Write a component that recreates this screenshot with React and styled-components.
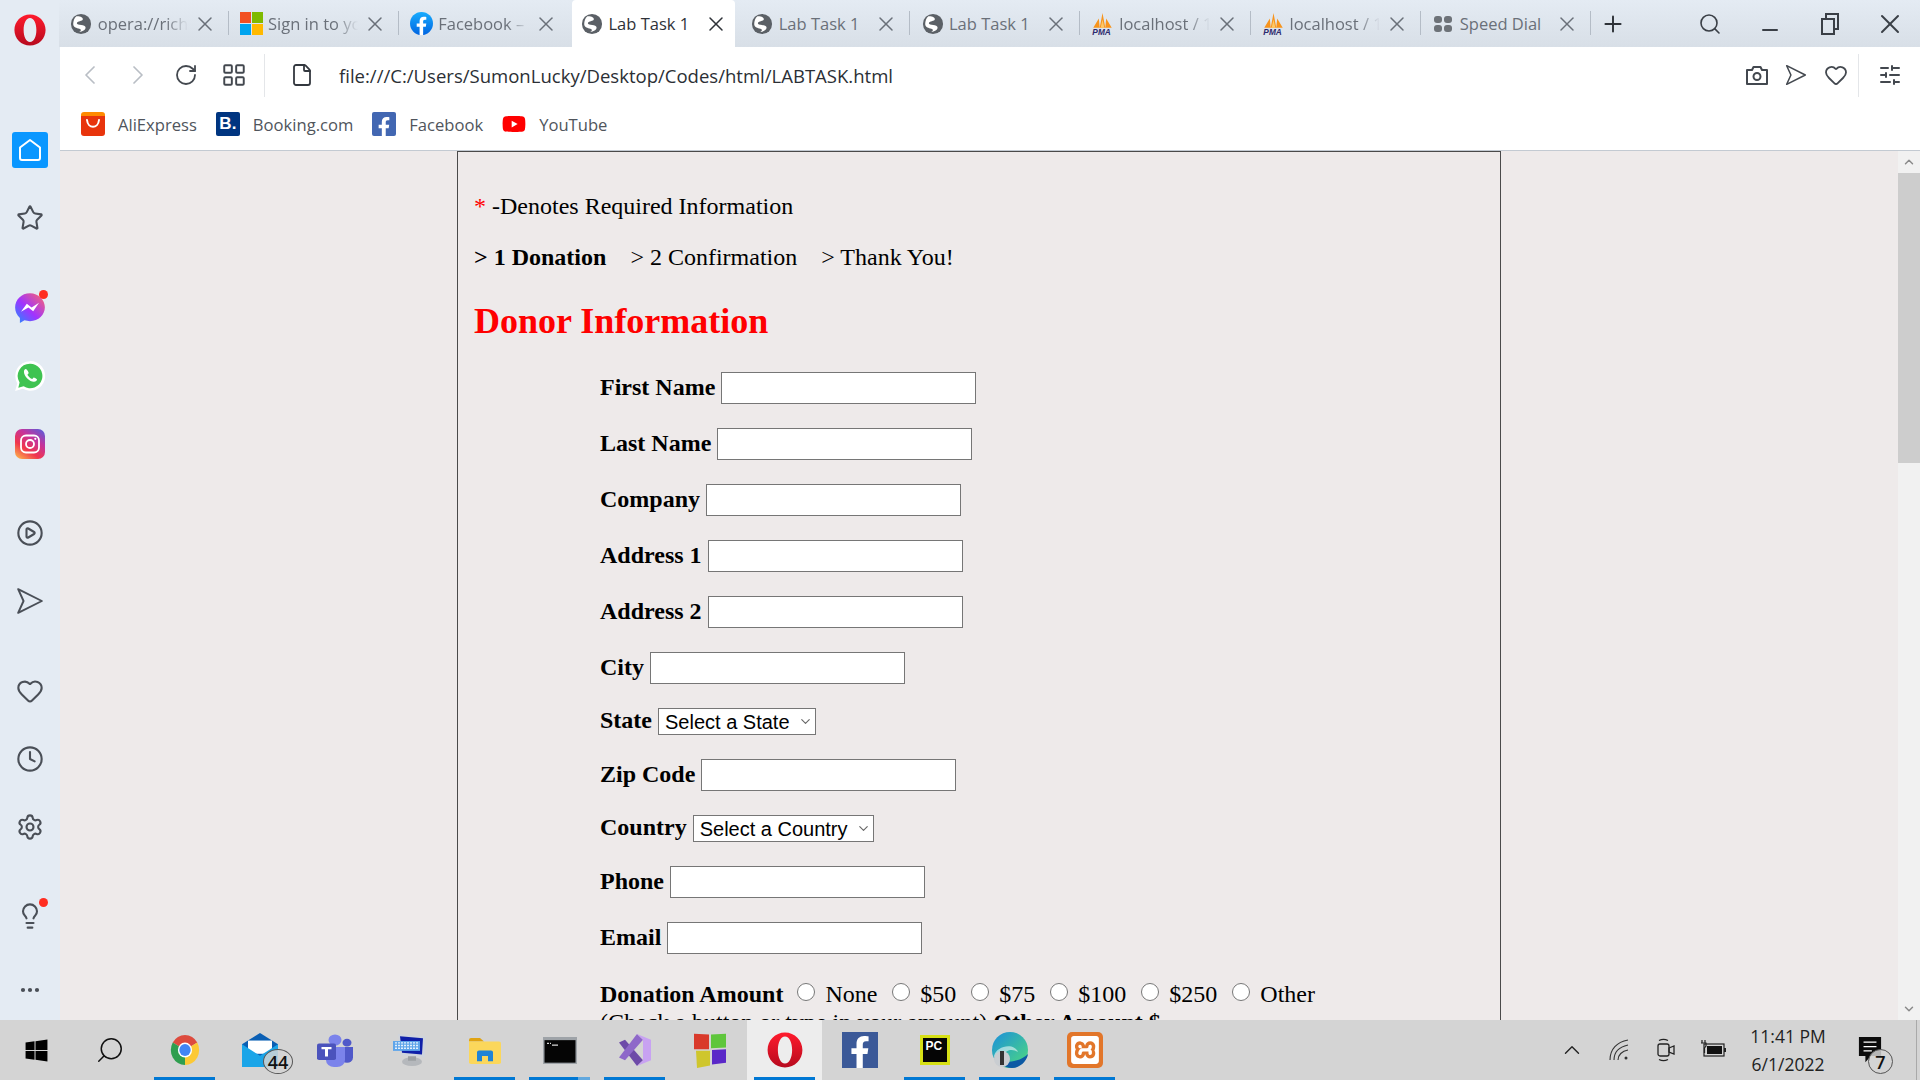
import React from "react";
import styled, { createGlobalStyle } from "styled-components";
import {
  ChevronDown,
  ChevronLeft,
  ChevronRight,
  ChevronUp,
  Clock,
  CirclePlay,
  File,
  Heart,
  Lightbulb,
  LayoutGrid,
  Minus,
  MoreHorizontal,
  Plus,
  RotateCw,
  Search,
  Settings,
  SlidersHorizontal,
  Star,
  X,
} from "lucide-react";
import { FaFacebookF, FaWindows, FaYoutube } from "react-icons/fa";
import { SiXampp } from "react-icons/si";

const UI_FONT = `"Open Sans", "Noto Sans", sans-serif`;

const GlobalStyle = createGlobalStyle`
  html, body {
    margin: 0;
    padding: 0;
    overflow: hidden;
    background: #eeeaea;
  }
`;

const Screen = styled.div`
  width: 1920px;
  height: 1080px;
  display: flex;
  flex-direction: column;
  overflow: hidden;
`;

const Browser = styled.div`
  flex: 1;
  min-height: 0;
  display: flex;
`;

const Sidebar = styled.aside`
  width: 60px;
  flex: none;
  background: #e4ebf3;
  display: flex;
  flex-direction: column;
  align-items: center;
`;

const LogoSlot = styled.div`
  height: 132px;
  flex: none;
  padding-top: 13px;
  box-sizing: border-box;
`;

const SideGroup = styled.div`
  display: flex;
  flex-direction: column;
  gap: 32px;
  margin-bottom: ${({ $after }) => $after ?? 54}px;
`;

const SideIcon = styled.div`
  position: relative;
  width: 36px;
  height: 36px;
  display: flex;
  align-items: center;
  justify-content: center;
  color: #4a4f57;
  border-radius: 3px;
  background: ${({ $active }) => ($active ? "#0a97ff" : "transparent")};
`;

const RedDot = styled.span`
  position: absolute;
  top: 0;
  right: 0;
  width: 9px;
  height: 9px;
  border-radius: 50%;
  background: #ff2d20;
`;

const Content = styled.div`
  flex: 1;
  min-width: 0;
  display: flex;
  flex-direction: column;
`;

const TabStrip = styled.div`
  height: 47px;
  flex: none;
  display: flex;
  align-items: stretch;
  margin-left: -1.25px;
  background: linear-gradient(#e4ebf3, #d8dfe7);
`;

const Tab = styled.div`
  position: relative;
  width: 170.25px;
  flex: none;
  box-sizing: border-box;
  display: flex;
  align-items: center;
  gap: 5px;
  padding: 0 12px 0 11px;
  font: 16.5px ${UI_FONT};
  color: ${({ $active }) => ($active ? "#2e3238" : "#6a7079")};

  &::before {
    content: "";
    display: ${({ $active }) => ($active ? "block" : "none")};
    position: absolute;
    inset: 0 5px 0 2px;
    background: #fff;
    border-radius: 4px 4px 0 0;
  }

  &::after {
    content: "";
    display: ${({ $sep }) => ($sep ? "block" : "none")};
    position: absolute;
    right: 0;
    top: 11px;
    bottom: 12px;
    width: 1px;
    background: #b4bcc6;
  }

  & > * {
    position: relative;
    z-index: 1;
  }
`;

const TabFavicon = styled.div`
  width: 23px;
  height: 23px;
  flex: none;
  display: flex;
  align-items: center;
  justify-content: center;
`;

const TabLabel = styled.span`
  flex: 1;
  min-width: 0;
  white-space: nowrap;
  overflow: hidden;
  mask-image: ${({ $fade }) =>
    $fade ? "linear-gradient(90deg, #000 75%, transparent 100%)" : "none"};
`;

const NewTab = styled.div`
  width: 44px;
  display: flex;
  align-items: center;
  justify-content: center;
  color: #2e3238;
`;

const WindowControls = styled.div`
  margin-left: auto;
  display: flex;
`;

const WindowButton = styled.div`
  width: 60px;
  display: flex;
  align-items: center;
  justify-content: center;
  color: #3a3f46;
`;

const Toolbar = styled.div`
  height: 53px;
  flex: none;
  box-sizing: border-box;
  background: #fff;
  display: flex;
  align-items: center;
  padding: 3px 9px 0 6px;
`;

const ToolButton = styled.div`
  width: ${({ $w }) => $w ?? 48}px;
  height: 44px;
  flex: none;
  display: flex;
  align-items: center;
  justify-content: center;
  color: ${({ $dim }) => ($dim ? "#b9bec5" : "#43484f")};
`;

const ToolDivider = styled.div`
  width: 1px;
  height: 43px;
  flex: none;
  background: #e4e6e9;
  margin: 0 ${({ $right }) => $right ?? 0}px 0 ${({ $left }) => $left ?? 0}px;
`;

const UrlIcon = styled.div`
  width: 74px;
  flex: none;
  display: flex;
  justify-content: center;
  color: #33383f;
`;

const UrlText = styled.div`
  flex: 1;
  font: 18.55px ${UI_FONT};
  color: #2b2f35;
  white-space: nowrap;
`;

const Bookmarks = styled.div`
  height: 51px;
  flex: none;
  box-sizing: border-box;
  background: #fff;
  border-bottom: 1px solid #c3cad2;
  display: flex;
  align-items: flex-start;
  padding: 12px 0 0 21px;
  gap: 19px;
`;

const Bookmark = styled.div`
  display: flex;
  align-items: center;
  gap: 13px;
  font: 16.6px ${UI_FONT};
  color: #50555c;
`;

const BookmarkIcon = styled.div`
  width: 24px;
  height: 24px;
  flex: none;
  display: flex;
  align-items: center;
  justify-content: center;
  color: #fff;
  background: ${({ $bg }) => $bg};
  border-radius: ${({ $round }) => $round ?? 2}px;
  overflow: hidden;
`;

const BookingMark = styled.span`
  font: 700 17px "Liberation Sans", sans-serif;
`;

const Viewport = styled.div`
  flex: 1;
  min-height: 0;
  display: flex;
  background: #eeeaea;
`;

const PageArea = styled.main`
  flex: 1;
  min-width: 0;
  overflow: hidden;
  padding-left: 397px;
`;

const Panel = styled.div`
  width: 1044px;
  box-sizing: border-box;
  border: 1.5px solid #4a4a4a;
  border-bottom: 0;
  padding: 41px 16px 0;
  font: 24px "Liberation Serif", "Times New Roman", serif;
  color: #000;
`;

const Note = styled.p`
  margin: 0 0 24px;
`;

const Required = styled.span`
  color: #f00;
`;

const Steps = styled.div`
  display: flex;
  gap: 24px;
`;

const Step = styled.span`
  font-weight: ${({ $current }) => ($current ? 700 : 400)};
`;

const Heading = styled.h2`
  margin: 29px 0 30px;
  font-size: 36px;
  font-weight: 700;
  color: #f00;
`;

const Fields = styled.form`
  margin: 0 0 0 126px;
`;

const FieldRow = styled.div`
  display: flex;
  align-items: center;
  gap: 6px;
  margin-bottom: 24px;

  &:nth-last-child(3) {
    margin-bottom: 27px;
  }

  label {
    line-height: 25px;
    margin-bottom: 2px;
  }
`;

const FieldLabel = styled.label`
  font-weight: 700;
`;

const TextInput = styled.input`
  width: 255px;
  height: 32px;
  box-sizing: border-box;
  border: 1.5px solid #767676;
  background: #fff;
  padding: 0 3px;
  border-radius: 0;
`;

const DropdownWrap = styled.div`
  position: relative;
  display: flex;
  color: #666;

  svg {
    position: absolute;
    right: 3px;
    top: 6px;
    pointer-events: none;
  }
`;

const Dropdown = styled.select`
  width: ${({ $w }) => $w}px;
  height: 27px;
  box-sizing: border-box;
  appearance: none;
  border: 1.5px solid #767676;
  border-radius: 0;
  background-color: #fff;
  font: 20px "Liberation Sans", Arial, sans-serif;
  color: #000;
  padding: 0 0 0 6px;
  margin: 0;
`;

const AmountLine = styled.div`
  line-height: 27.6px;
`;

const Radio = styled.input`
  width: 18px;
  height: 18px;
  margin: 0 10px 0 ${({ $first }) => ($first ? 14 : 9)}px;
  vertical-align: 1px;
`;

const AmountLabel = styled.span`
  margin-right: 6px;
`;

const Scrollbar = styled.div`
  width: 22px;
  flex: none;
  background: #f1f1f1;
  display: flex;
  flex-direction: column;
`;

const ScrollArrow = styled.div`
  height: 22px;
  flex: none;
  display: flex;
  align-items: center;
  justify-content: center;
  color: #8a8a8a;
  margin-top: ${({ $end }) => ($end ? "auto" : 0)};
`;

const ScrollThumb = styled.div`
  height: 290px;
  flex: none;
  background: #cdcdcd;
`;

const Taskbar = styled.footer`
  height: 60px;
  flex: none;
  display: flex;
  background: #d4d4d4;
  position: relative;
  z-index: 2;
`;

const TaskItem = styled.div`
  position: relative;
  width: ${({ $w }) => $w ?? 75}px;
  flex: none;
  display: flex;
  align-items: center;
  justify-content: center;
  background: ${({ $active }) => ($active ? "#ededed" : "transparent")};

  &::after {
    content: "";
    display: ${({ $open }) => ($open ? "block" : "none")};
    position: absolute;
    left: 7px;
    right: 7px;
    bottom: 0;
    height: 3px;
    background: ${({ $stacked }) =>
      $stacked ? "linear-gradient(90deg, #0078d4 80%, #62a8de 80%)" : "#0078d4"};
  }
`;

const CountBadge = styled.span`
  position: absolute;
  left: ${({ $left }) => $left}px;
  top: ${({ $top }) => $top}px;
  width: ${({ $w }) => $w}px;
  height: 25px;
  box-sizing: border-box;
  border: 1px solid #555;
  border-radius: 50%;
  background: rgba(212, 212, 212, 0.85);
  display: flex;
  align-items: center;
  justify-content: center;
  font: 600 18px ${UI_FONT};
  color: #111;
`;

const Tray = styled.div`
  margin-left: auto;
  display: flex;
  align-items: center;
  color: #222;
`;

const TrayIcon = styled.div`
  width: 47px;
  display: flex;
  justify-content: center;
`;

const ClockBlock = styled.div`
  width: 80px;
  margin-left: 12px;
  text-align: center;
  font: 17.5px/28px ${UI_FONT};
  color: #222;
`;

const ChatSlot = styled.div`
  position: relative;
  width: 88px;
  box-sizing: border-box;
  padding-right: 4px;
  display: flex;
  justify-content: center;
`;

const ShowDesktop = styled.div`
  width: 1px;
  align-self: stretch;
  background: #a9a9a9;
  margin-right: 3px;
`;

const GlobeIcon = () => (
  <svg width="22" height="22" viewBox="0 0 24 24">
    <circle cx="12" cy="12" r="11" fill="#5b6066" />
    <path
      d="M7 3.500c3 0 7 .6 7 3.200 0 2.400-6.500 1.600-6.500 4.600 0 2.700 9.500 1 9.500 4.600 0 2.700-3.500 4.600-7 4.900 2.500-1.800 3-3-1-3.900-3-.8-5.500-1.900-5.500-4.900C3.500 9 4.500 5.500 7 3.500z"
      fill="#fff"
    />
  </svg>
);

const MicrosoftIcon = () => (
  <svg width="23" height="23" viewBox="0 0 23 23">
    <rect width="11" height="11" fill="#f25022" />
    <rect x="12" width="11" height="11" fill="#7fba00" />
    <rect y="12" width="11" height="11" fill="#00a4ef" />
    <rect x="12" y="12" width="11" height="11" fill="#ffb900" />
  </svg>
);

const FacebookRound = () => (
  <svg width="23" height="23" viewBox="0 0 24 24">
    <defs>
      <linearGradient id="fbRound" x1="0" y1="0" x2="0" y2="1">
        <stop offset="0" stopColor="#18acfe" />
        <stop offset="1" stopColor="#0165e1" />
      </linearGradient>
    </defs>
    <circle cx="12" cy="12" r="12" fill="url(#fbRound)" />
    <path
      d="M16.500 15.400l.5-3.400h-3.300V9.800c0-.9.500-1.800 1.900-1.800H17V5.100s-1.300-.2-2.600-.2c-2.700 0-4.400 1.600-4.400 4.500V12H7v3.400h3V24h3.700v-8.600z"
      fill="#fff"
    />
  </svg>
);

const PmaIcon = () => (
  <svg width="24" height="24" viewBox="0 0 24 26">
    <path d="M2 17L8 7l1 10zM9 17l3-16 3 16zM15 17l1-10 6 10z" fill="#f7941d" />
    <path d="M10 17l2-9 2 9z" fill="#ffc966" />
    <text x="1" y="25" fontFamily="Liberation Sans" fontStyle="italic" fontWeight="700" fontSize="9" fill="#2d2a6e">
      PMA
    </text>
  </svg>
);

const SpeedDialIcon = () => (
  <svg width="20" height="20" viewBox="0 0 20 20" fill="#6d7278">
    <rect x="1" y="2" width="8" height="7" rx="3" />
    <rect x="11" y="2" width="8" height="7" rx="3" />
    <rect x="1" y="11" width="8" height="7" rx="3" />
    <rect x="11" y="11" width="8" height="7" rx="3" />
  </svg>
);

const OperaLogo = ({ size = 34 }) => (
  <svg width={size} height={size} viewBox="0 0 48 48">
    <defs>
      <linearGradient id={`opera${size}`} x1="0" y1="0" x2="0" y2="1">
        <stop offset="0" stopColor="#ff1b2d" />
        <stop offset="1" stopColor="#b70a1e" />
      </linearGradient>
    </defs>
    <path
      fillRule="evenodd"
      d="M24 2c12.500 0 22 10 22 22s-9.500 22-22 22S2 36 2 24 11.500 2 24 2zm0 5c-5.500 0-9 7.500-9 17s3.500 17 9 17 9-7.500 9-17-3.500-17-9-17z"
      fill={`url(#opera${size})`}
    />
  </svg>
);

const HomeIcon = () => (
  <svg width="26" height="26" viewBox="0 0 26 26" fill="none" stroke="#fff" strokeWidth="2" strokeLinejoin="round">
    <path d="M3 10.500L13 3l10 7.500V21a2 2 0 0 1-2 2H5a2 2 0 0 1-2-2z" />
  </svg>
);

const SendIcon = ({ size = 28, width = 1.8 }) => (
  <svg width={size} height={size} viewBox="0 0 26 26" fill="none" stroke="currentColor" strokeWidth={width} strokeLinejoin="round">
    <path d="M2 2l22 11L2 24l5-11z" />
  </svg>
);

const MessengerIcon = () => (
  <svg width="34" height="34" viewBox="0 0 32 32">
    <defs>
      <linearGradient id="messenger" x1="0" y1="1" x2="1" y2="0">
        <stop offset="0" stopColor="#1e90ff" />
        <stop offset="0.45" stopColor="#a033ff" />
        <stop offset="1" stopColor="#ff6968" />
      </linearGradient>
    </defs>
    <path d="M16 2C8 2 2 8 2 15.500c0 4 1.700 7.400 4.500 9.800V30l4.300-2.400c1.600.5 3.300.8 5.200.8 8 0 14-5.900 14-13S24 2 16 2z" fill="url(#messenger)" />
    <path d="M7.500 19.500L13 12l4.500 3.500L24.500 11 19 19l-4.500-3.500z" fill="#fff" />
  </svg>
);

const WhatsappIcon = () => (
  <svg width="34" height="34" viewBox="0 0 32 32">
    <path d="M16 2a14 14 0 0 0-12 21L2 30l7.200-1.900A14 14 0 1 0 16 2z" fill="#fff" />
    <path d="M16 4.500a11.500 11.500 0 0 0-9.800 17.600L5 27l5-1.300A11.500 11.500 0 1 0 16 4.500z" fill="#3fc351" />
    <path d="M11.800 9.500c-.5 0-1.500.9-1.500 2.700 0 3.800 5.300 9.300 9.400 9.300 1.800 0 2.900-1.300 2.900-2.200 0-.4-2.600-1.800-3-1.800-.5 0-1.100 1.300-1.600 1.300-1 0-4.300-3-4.300-4 0-.6 1-1.100 1-1.700 0-.3-1.300-3.600-2.900-3.600z" fill="#fff" />
  </svg>
);

const InstagramIcon = () => (
  <svg width="30" height="30" viewBox="0 0 30 30">
    <defs>
      <linearGradient id="insta" x1="0.1" y1="1" x2="0.8" y2="0">
        <stop offset="0" stopColor="#fdb04b" />
        <stop offset="0.35" stopColor="#f0364e" />
        <stop offset="0.7" stopColor="#c4339d" />
        <stop offset="1" stopColor="#6a56d0" />
      </linearGradient>
    </defs>
    <rect width="30" height="30" rx="7" fill="url(#insta)" />
    <rect x="6" y="6.500" width="18" height="17" rx="5" fill="none" stroke="#fff" strokeWidth="1.800" />
    <circle cx="15" cy="15" r="4" fill="none" stroke="#fff" strokeWidth="1.800" />
    <circle cx="20.300" cy="9.800" r="1.100" fill="#fff" />
  </svg>
);

const ChromeIcon = () => (
  <svg width="34" height="36" viewBox="0 0 48 48" preserveAspectRatio="none">
    <path d="M24 24L6.700 14A20 20 0 0 1 41.300 14z" fill="#dd4b3e" />
    <path d="M24 24L41.300 14A20 20 0 0 1 24 44z" fill="#fcc934" />
    <path d="M24 24L24 44A20 20 0 0 1 6.700 14z" fill="#2f9e4f" />
    <circle cx="24" cy="24" r="10" fill="#fff" />
    <circle cx="24" cy="24" r="8" fill="#4285f4" />
  </svg>
);

const MailIcon = () => (
  <svg width="36" height="34" viewBox="0 0 36 36" preserveAspectRatio="none">
    <path d="M0 12L18 0l18 12v22H0z" fill="#0a5fb4" />
    <path d="M6 8h24v14H6z" fill="#fff" />
    <path d="M0 12l18 12 18-12v24H0z" fill="#1aa5e8" />
  </svg>
);

const TeamsIcon = () => (
  <svg width="36" height="33" viewBox="0 0 36 38" preserveAspectRatio="none">
    <circle cx="18" cy="7" r="6.500" fill="#7b83eb" />
    <circle cx="30" cy="10" r="4.500" fill="#5059c9" />
    <path d="M24 15h12v12a6 6 0 0 1-12 0z" fill="#5059c9" />
    <path d="M9 15h19v15a8 8 0 0 1-8 8h-3a8 8 0 0 1-8-8z" fill="#7b83eb" />
    <rect x="0" y="11" width="19" height="19" rx="2" fill="#4b53bc" />
    <path d="M4.500 15h10v2.500h-3.500V26H8v-8.500H4.500z" fill="#fff" />
  </svg>
);

const KeyboardIcon = () => (
  <svg width="36" height="34" viewBox="0 0 36 38" preserveAspectRatio="none">
    <path d="M6 1l28 3-1 23-24-2z" fill="#cfd4dc" />
    <path d="M8 3.500l23 2.500-1 18-20-2z" fill="#0f1fa8" />
    <rect x="1" y="9" width="27" height="11" fill="#5fa5ea" />
    <path d="M3 11h23M3 14h23M3 17h23" stroke="#e4f0fb" strokeWidth="1.500" strokeDasharray="2 1" />
    <ellipse cx="20" cy="32" rx="10" ry="5" fill="#b5b8bc" />
    <rect x="16" y="26" width="8" height="5" fill="#9c9fa3" />
  </svg>
);

const FolderIcon = () => (
  <svg width="32" height="27" viewBox="0 0 32 30" preserveAspectRatio="none">
    <path d="M0 3a2 2 0 0 1 2-2h9l4 4h-15z" fill="#e0a312" />
    <path d="M0 5h30a2 2 0 0 1 2 2v21a2 2 0 0 1-2 2H2a2 2 0 0 1-2-2z" fill="#fbd75b" />
    <path d="M8 27V17a2 2 0 0 1 2-2h12a2 2 0 0 1 2 2v10h-5v-6h-6v6z" fill="#1f84d6" />
  </svg>
);

const ConsoleIcon = () => (
  <svg width="34" height="27" viewBox="0 0 34 30" preserveAspectRatio="none">
    <rect width="34" height="30" fill="#9ea3a8" />
    <rect x="1.500" y="3.500" width="31" height="25" fill="#050505" />
    <path d="M4 7h2M7 7h1M9 9h6" stroke="#d8d8d8" strokeWidth="1.500" />
  </svg>
);

const VisualStudioIcon = () => (
  <svg width="32" height="32" viewBox="0 0 32 34" preserveAspectRatio="none">
    <path d="M0 9l6-3 18 22-6 6z" fill="#6d4aa8" />
    <path d="M0 25l6 3L24 6 18 0z" fill="#8e68c9" />
    <path d="M18 0l14 6v22l-14 6 6-6V6z" fill="#c8a2f2" />
  </svg>
);

const CodeBlocksIcon = () => (
  <svg width="34" height="36" viewBox="0 0 34 42" preserveAspectRatio="none">
    <path d="M1 2l15 1v17L1 20z" fill="#d93a2b" />
    <path d="M18 3l15-1v16l-15 1z" fill="#5fc63c" />
    <path d="M3 22l14 0v17L4 42z" fill="#cfc62d" />
    <path d="M19 21l14-1v16l-14 2z" fill="#5a28c8" />
  </svg>
);

const FacebookTile = styled.div`
  width: 36px;
  height: 36px;
  background: #3b5998;
  color: #fff;
  display: flex;
  align-items: flex-end;
  justify-content: center;
`;

const PyCharmTile = styled.div`
  width: 30px;
  height: 30px;
  box-sizing: border-box;
  border: 3px solid #d6e016;
  background: #050505;
  color: #fff;
  font: 700 12px "Liberation Sans", sans-serif;
  padding: 2px 0 0 3px;
  line-height: 12px;
`;

const EdgeIcon = () => (
  <svg width="36" height="36" viewBox="0 0 36 36">
    <defs>
      <linearGradient id="edgeTop" x1="0" y1="0" x2="1" y2="1">
        <stop offset="0" stopColor="#1b8fdc" />
        <stop offset="1" stopColor="#4fdc7c" />
      </linearGradient>
    </defs>
    <circle cx="18" cy="18" r="18" fill="url(#edgeTop)" />
    <path d="M36 22c-1 7-8 14-16 14-8 0-15-6-15-12 4 5 11 7 17 5 6-1 11-4 14-7z" fill="#0c59a4" />
    <path d="M2 24C4 14 22 10 26 20c-6-4-14-2-14 5 0 3 1 5 2 6-6 0-10-3-12-7z" fill="#fff" opacity="0.55" />
    <circle cx="10" cy="27" r="8" fill="#c9cdd1" />
    <rect x="8" y="19" width="4" height="14" fill="#333" />
  </svg>
);

const XamppTile = styled.div`
  width: 36px;
  height: 36px;
  border-radius: 5px;
  background: #e2762a;
  color: #fff;
  display: flex;
  align-items: center;
  justify-content: center;
`;

const WifiIcon = () => (
  <svg width="20" height="22" viewBox="0 0 20 22" fill="none" stroke="#333" strokeWidth="1.100">
    <path d="M1 21C1 10 8 3 19 1M5 21c0-8 5-13 14-15M9 21c0-5 4-9 10-10" />
    <circle cx="17" cy="19" r="1.500" fill="#333" stroke="none" />
  </svg>
);

const CallIcon = () => (
  <svg width="20" height="24" viewBox="0 0 20 24" fill="none" stroke="#222" strokeWidth="1.300">
    <rect x="2" y="6" width="11" height="12" rx="2" />
    <path d="M13 10l5-2v8l-5-2z" />
    <path d="M3 2.500c3-1.500 6-1.500 9 0M3 21.500c3 1.500 6 1.500 9 0" />
  </svg>
);

const BatteryIcon = () => (
  <svg width="26" height="22" viewBox="0 0 26 22" fill="none" stroke="#222" strokeWidth="1.200">
    <rect x="4" y="5" width="20" height="12" />
    <rect x="7" y="7" width="15" height="8" fill="#111" stroke="none" />
    <rect x="24" y="9" width="2" height="4" fill="#222" stroke="none" />
    <path d="M2 1v3M5 1v3M1 4h5v3l-1.500 2v5" />
  </svg>
);

const ChatIcon = () => (
  <svg width="24" height="26" viewBox="0 0 26 30" preserveAspectRatio="none">
    <path d="M1 0h24v22H14l-6 7v-7H1z" fill="#0c0c0c" />
    <path d="M6 6h14M6 11h14M6 16h9" stroke="#fff" strokeWidth="1.500" />
  </svg>
);

const tabs = [
  { id: 1, icon: <GlobeIcon />, label: "opera://richer", fade: true, sep: true },
  { id: 2, icon: <MicrosoftIcon />, label: "Sign in to your", fade: true, sep: true },
  { id: 3, icon: <FacebookRound />, label: "Facebook – Log", fade: true },
  { id: 4, icon: <GlobeIcon />, label: "Lab Task 1", active: true },
  { id: 5, icon: <GlobeIcon />, label: "Lab Task 1", sep: true },
  { id: 6, icon: <GlobeIcon />, label: "Lab Task 1", sep: true },
  { id: 7, icon: <PmaIcon />, label: "localhost / 127", fade: true, sep: true },
  { id: 8, icon: <PmaIcon />, label: "localhost / 127", fade: true, sep: true },
  { id: 9, icon: <SpeedDialIcon />, label: "Speed Dial", sep: true },
];

const fields = [
  { label: "First Name" },
  { label: "Last Name" },
  { label: "Company" },
  { label: "Address 1" },
  { label: "Address 2" },
  { label: "City" },
  { label: "State", select: "Select a State", width: 158 },
  { label: "Zip Code" },
  { label: "Country", select: "Select a Country", width: 181 },
  { label: "Phone" },
  { label: "Email" },
];

const amounts = ["None", "$50", "$75", "$100", "$250", "Other"];

export default function App() {
  return (
    <Screen>
      <GlobalStyle />
      <Browser>
        <Sidebar>
          <LogoSlot>
            <OperaLogo />
          </LogoSlot>
          <SideGroup>
            <SideIcon $active>
              <HomeIcon />
            </SideIcon>
            <SideIcon>
              <Star size={28} strokeWidth={1.8} />
            </SideIcon>
          </SideGroup>
          <SideGroup $after={53}>
            <SideIcon>
              <MessengerIcon />
              <RedDot />
            </SideIcon>
            <SideIcon>
              <WhatsappIcon />
            </SideIcon>
            <SideIcon>
              <InstagramIcon />
            </SideIcon>
          </SideGroup>
          <SideGroup>
            <SideIcon>
              <CirclePlay size={28} strokeWidth={1.8} />
            </SideIcon>
            <SideIcon>
              <SendIcon />
            </SideIcon>
          </SideGroup>
          <SideGroup $after={53}>
            <SideIcon>
              <Heart size={28} strokeWidth={1.8} />
            </SideIcon>
            <SideIcon>
              <Clock size={28} strokeWidth={1.8} />
            </SideIcon>
            <SideIcon>
              <Settings size={28} strokeWidth={1.8} />
            </SideIcon>
          </SideGroup>
          <SideGroup $after={38}>
            <SideIcon>
              <Lightbulb size={28} strokeWidth={1.8} />
              <RedDot />
            </SideIcon>
          </SideGroup>
          <SideIcon>
            <MoreHorizontal size={24} strokeWidth={2.2} />
          </SideIcon>
        </Sidebar>

        <Content>
          <TabStrip>
            {tabs.map((tab) => (
              <Tab key={tab.id} $active={tab.active} $sep={tab.sep}>
                <TabFavicon>{tab.icon}</TabFavicon>
                <TabLabel $fade={tab.fade}>{tab.label}</TabLabel>
                <X size={24} strokeWidth={1.5} />
              </Tab>
            ))}
            <NewTab>
              <Plus size={26} strokeWidth={1.8} />
            </NewTab>
            <WindowControls>
              <WindowButton>
                <Search size={24} strokeWidth={1.6} />
              </WindowButton>
              <WindowButton>
                <Minus size={24} strokeWidth={2} style={{ marginTop: 12 }} />
              </WindowButton>
              <WindowButton>
                <svg width="20" height="22" viewBox="0 0 20 22" fill="none" stroke="currentColor" strokeWidth="2">
                  <rect x="2" y="6" width="12" height="15" />
                  <path d="M6 5V1h12v15h-3" />
                </svg>
              </WindowButton>
              <WindowButton>
                <X size={32} strokeWidth={1.5} />
              </WindowButton>
            </WindowControls>
          </TabStrip>

          <Toolbar>
            <ToolButton $dim>
              <ChevronLeft size={32} strokeWidth={1.3} />
            </ToolButton>
            <ToolButton $dim>
              <ChevronRight size={32} strokeWidth={1.3} />
            </ToolButton>
            <ToolButton>
              <RotateCw size={24} strokeWidth={1.8} />
            </ToolButton>
            <ToolButton>
              <LayoutGrid size={26} strokeWidth={1.8} />
            </ToolButton>
            <ToolDivider $left={6} />
            <UrlIcon>
              <File size={24} strokeWidth={1.8} />
            </UrlIcon>
            <UrlText>file:///C:/Users/SumonLucky/Desktop/Codes/html/LABTASK.html</UrlText>
            <ToolButton $w={39}>
              <svg width="24" height="24" viewBox="0 0 24 24" fill="none" stroke="currentColor" strokeWidth="2">
                <path d="M2 7h5l1.500-3h7L17 7h5v14H2z" strokeLinejoin="round" />
                <circle cx="12" cy="13.500" r="3.500" />
              </svg>
            </ToolButton>
            <ToolButton $w={40}>
              <SendIcon size={22} width={1.8} />
            </ToolButton>
            <ToolButton $w={39}>
              <Heart size={24} strokeWidth={1.8} />
            </ToolButton>
            <ToolDivider $left={3} $right={10} />
            <ToolButton $w={42}>
              <SlidersHorizontal size={24} strokeWidth={2} />
            </ToolButton>
          </Toolbar>

          <Bookmarks>
            <Bookmark>
              <BookmarkIcon $bg="linear-gradient(#ff8a00 0 18%, #e8340c 18%)" $round={3}>
                <svg width="18" height="12" viewBox="0 0 18 12" fill="none" stroke="#fff" strokeWidth="2" strokeLinecap="round">
                  <path d="M3 2c1 9 11 9 12 0" />
                </svg>
              </BookmarkIcon>
              AliExpress
            </Bookmark>
            <Bookmark>
              <BookmarkIcon $bg="#003580">
                <BookingMark>B.</BookingMark>
              </BookmarkIcon>
              Booking.com
            </Bookmark>
            <Bookmark>
              <BookmarkIcon $bg="#4267b2">
                <FaFacebookF size={20} style={{ marginTop: 5 }} />
              </BookmarkIcon>
              Facebook
            </Bookmark>
            <Bookmark>
              <BookmarkIcon $bg="transparent">
                <FaYoutube size={26} color="#f00" />
              </BookmarkIcon>
              YouTube
            </Bookmark>
          </Bookmarks>

          <Viewport>
            <PageArea>
              <Panel>
                <Note>
                  <Required>*</Required> -Denotes Required Information
                </Note>
                <Steps>
                  <Step $current>&gt; 1 Donation</Step>
                  <Step>&gt; 2 Confirmation</Step>
                  <Step>&gt; Thank You!</Step>
                </Steps>
                <Heading>Donor Information</Heading>
                <Fields>
                  {fields.map((field) => (
                    <FieldRow key={field.label}>
                      <FieldLabel>{field.label}</FieldLabel>
                      {field.select ? (
                        <DropdownWrap>
                          <Dropdown $w={field.width}>
                            <option>{field.select}</option>
                          </Dropdown>
                          <ChevronDown size={15} strokeWidth={1.8} />
                        </DropdownWrap>
                      ) : (
                        <TextInput type="text" />
                      )}
                    </FieldRow>
                  ))}
                  <AmountLine>
                    <FieldLabel>Donation Amount</FieldLabel>
                    {amounts.map((amount, i) => (
                      <React.Fragment key={amount}>
                        <Radio type="radio" name="amount" $first={i === 0} />
                        <AmountLabel>{amount}</AmountLabel>
                      </React.Fragment>
                    ))}
                  </AmountLine>
                  <AmountLine>
                    (Check a button or type in your amount) <FieldLabel>Other Amount $</FieldLabel>
                  </AmountLine>
                </Fields>
              </Panel>
            </PageArea>
            <Scrollbar>
              <ScrollArrow>
                <ChevronUp size={14} strokeWidth={2.5} />
              </ScrollArrow>
              <ScrollThumb />
              <ScrollArrow $end>
                <ChevronDown size={14} strokeWidth={2.5} />
              </ScrollArrow>
            </Scrollbar>
          </Viewport>
        </Content>
      </Browser>

      <Taskbar>
        <TaskItem $w={72}>
          <FaWindows size={25} color="#000" />
        </TaskItem>
        <TaskItem>
          <Search size={30} strokeWidth={1.2} color="#111" style={{ transform: "scaleX(-1)" }} />
        </TaskItem>
        <TaskItem $open>
          <ChromeIcon />
        </TaskItem>
        <TaskItem>
          <MailIcon />
          <CountBadge $left={41} $top={29} $w={30}>44</CountBadge>
        </TaskItem>
        <TaskItem>
          <TeamsIcon />
        </TaskItem>
        <TaskItem>
          <KeyboardIcon />
        </TaskItem>
        <TaskItem $open>
          <FolderIcon />
        </TaskItem>
        <TaskItem $open $stacked>
          <ConsoleIcon />
        </TaskItem>
        <TaskItem $open>
          <VisualStudioIcon />
        </TaskItem>
        <TaskItem>
          <CodeBlocksIcon />
        </TaskItem>
        <TaskItem $active $open>
          <OperaLogo size={38} />
        </TaskItem>
        <TaskItem>
          <FacebookTile>
            <FaFacebookF size={32} />
          </FacebookTile>
        </TaskItem>
        <TaskItem $open>
          <PyCharmTile>PC</PyCharmTile>
        </TaskItem>
        <TaskItem $open>
          <EdgeIcon />
        </TaskItem>
        <TaskItem $open>
          <XamppTile>
            <SiXampp size={28} />
          </XamppTile>
        </TaskItem>
        <Tray>
          <TrayIcon>
            <ChevronUp size={26} strokeWidth={1.3} />
          </TrayIcon>
          <TrayIcon>
            <WifiIcon />
          </TrayIcon>
          <TrayIcon>
            <CallIcon />
          </TrayIcon>
          <TrayIcon>
            <BatteryIcon />
          </TrayIcon>
          <ClockBlock>
            11:41 PM
            <br />
            6/1/2022
          </ClockBlock>
          <ChatSlot>
            <ChatIcon />
            <CountBadge $left={40} $top={12} $w={25}>7</CountBadge>
          </ChatSlot>
          <ShowDesktop />
        </Tray>
      </Taskbar>
    </Screen>
  );
}
